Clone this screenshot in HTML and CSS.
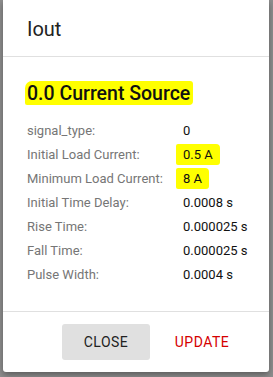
FILE: index.html
```html
<!DOCTYPE html>
<html lang="en">
<head>
    <meta charset="UTF-8">
    <meta name="viewport" content="width=device-width, initial-scale=1.0">
    <title>Iout</title>
    <link rel="stylesheet" href="styles.css">
</head>
<body>
    <div class="dialog">
        <div class="dialog-title">Iout</div>

        <div class="dialog-content">
            <h2 class="source-name"><span class="mark big">0.0 Current Source</span></h2>

            <div class="params">
                <div class="label">signal_type:</div>
                <div class="value">0</div>

                <div class="label">Initial Load Current:</div>
                <div class="value"><span class="mark">0.5 A</span></div>

                <div class="label">Minimum Load Current:</div>
                <div class="value"><span class="mark">8 A</span></div>

                <div class="label">Initial Time Delay:</div>
                <div class="value">0.0008 s</div>

                <div class="label">Rise Time:</div>
                <div class="value">0.000025 s</div>

                <div class="label">Fall Time:</div>
                <div class="value">0.000025 s</div>

                <div class="label">Pulse Width:</div>
                <div class="value">0.0004 s</div>
            </div>
        </div>

        <div class="dialog-actions">
            <button class="btn btn-close">Close</button>
            <button class="btn btn-update">Update</button>
        </div>
    </div>
</body>
</html>
```

FILE: styles.css
```css
body {
    margin: 0;
    background-color: #8e8e8e;
    font-family: Roboto, "Liberation Sans", Arial, sans-serif;
    height: 377px;
    overflow: hidden;
}
.dialog {
    margin-left: 3px;
    width: 266px;
    height: 372px;
    background-color: white;
    border-radius: 0 0 3px 3px;
    box-shadow: 0 3px 6px rgba(0, 0, 0, 0.35);
    display: flex;
    flex-direction: column;
}
.dialog-title {
    padding: 17px 24px 15px 24px;
    font-size: 20px;
    line-height: 24px;
    color: #222;
    border-bottom: 1px solid #e0e0e0;
}
.dialog-content {
    padding: 25px 10px 24px 24px;
    border-bottom: 1px solid #e0e0e0;
}
.source-name {
    margin: 0 0 13px 0;
    font-size: 19.5px;
    line-height: 24px;
    font-weight: 500;
    color: #111;
}
.mark {
    background-color: #ffff00;
    padding: 3px 7px;
    margin-left: -7px;
    border-radius: 2px 4px 3px 2px;
}
.mark.big {
    padding: 1px 3px 0 2px;
    margin-left: -2px;
    border-radius: 7px 3px 4px 2px;
}
.params {
    display: grid;
    grid-template-columns: 156px auto;
    font-size: 13px;
    line-height: 24px;
    white-space: nowrap;
}
.label {
    color: #767676;
}
.value {
    color: #111;
}
.dialog-actions {
    display: flex;
    justify-content: flex-end;
    gap: 8px;
    padding: 12px 23px 12px 0;
}
.btn {
    width: 88px;
    height: 36px;
    border: none;
    border-radius: 3px;
    font-family: Roboto, "Liberation Sans", Arial, sans-serif;
    font-size: 14px;
    font-weight: 400;
    letter-spacing: 0.5px;
    text-transform: uppercase;
    cursor: pointer;
}
.btn-close {
    background-color: #e0e0e0;
    color: #222;
}
.btn-update {
    background-color: transparent;
    color: #d50000;
}
```
